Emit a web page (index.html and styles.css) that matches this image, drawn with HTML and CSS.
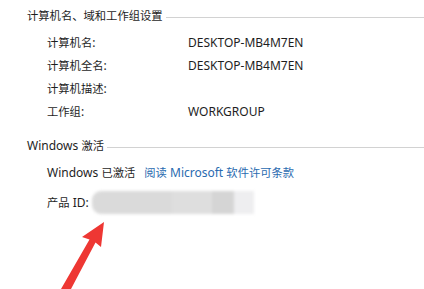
FILE: index.html
```html
<!DOCTYPE html>
<html lang="zh-CN">
<head>
<meta charset="utf-8">
<title>系统</title>
<link rel="stylesheet" href="styles.css">
</head>
<body>
<div class="page">
  <section class="group">
    <div class="group-head"><span class="group-title"><span class="cj">计算机名、域和工作组设置</span></span><span class="rule"></span></div>
    <div class="grid">
      <div class="label"><span class="cj">计算机名</span>:</div><div class="value">DESKTOP-MB4M7EN</div>
      <div class="label"><span class="cj">计算机全名</span>:</div><div class="value">DESKTOP-MB4M7EN</div>
      <div class="label"><span class="cj">计算机描述</span>:</div><div class="value"></div>
      <div class="label"><span class="cj">工作组</span>:</div><div class="value">WORKGROUP</div>
    </div>
  </section>
  <section class="group group-act">
    <div class="group-head"><span class="group-title">Windows <span class="cj">激活</span></span><span class="rule"></span></div>
    <div class="act-row first"><span>Windows <span class="cj">已激活</span></span><a class="link" href="#"><span class="cj">阅读</span> Microsoft <span class="cj">软件许可条款</span></a></div>
    <div class="act-row"><span><span class="cj">产品</span> ID:</span>
      <span class="blur"><i class="b1"></i><i class="b2"></i><i class="b3"></i><i class="b4"></i></span>
    </div>
  </section>
  <svg class="arrow" width="424" height="289" viewBox="0 0 424 289">
    <polygon points="104,222 101,247 95.5,242.5 71,289 61,289 89.5,239.5 82,237" fill="#ee3733"/>
  </svg>
</div>
</body>
</html>
```
FILE: styles.css
```css
html, body {
  margin: 0;
  padding: 0;
  background: #fff;
}
.page {
  position: relative;
  width: 424px;
  height: 289px;
  overflow: hidden;
  padding: 7px 0 0 27px;
  box-sizing: border-box;
  font-family: "Segoe UI", "Noto Sans", "Noto Sans CJK SC", sans-serif;
  font-size: 12px;
  color: #1e1e1e;
}
.cj {
  font-family: "Noto Sans CJK SC", sans-serif;
  font-size: 11.3px;
}
.group-head {
  display: flex;
  align-items: center;
  height: 16px;
  line-height: 16px;
}
.group-title {
  white-space: nowrap;
  padding-right: 3px;
}
.rule {
  flex: 1;
  height: 1px;
  background: #d2d2d2;
  margin-top: 5px;
}
.grid {
  display: grid;
  grid-template-columns: 141px 1fr;
  grid-auto-rows: 23px;
  align-items: center;
  margin: 7.5px 0 0 20px;
}
.group-act {
  margin-top: 14.5px;
}
.act-row {
  display: flex;
  align-items: center;
  height: 30px;
  margin-left: 20px;
  white-space: nowrap;
}
.act-row.first {
  margin-top: 4px;
}
.link {
  color: #2a6bb0;
  text-decoration: none;
  margin-left: 9px;
}
.blur {
  display: flex;
  height: 23px;
  margin-left: 3px;
  filter: blur(1.5px);
}
.blur i {
  display: block;
  height: 100%;
}
.b1 { width: 80px; background: #dadada; border-radius: 9px 0 0 9px; }
.b2 { width: 40px; background: #dedede; }
.b3 { width: 22px; background: #d5d5d5; }
.b4 { width: 20px; background: #eeeef0; }
.arrow {
  position: absolute;
  left: 0;
  top: 0;
  pointer-events: none;
}
```
